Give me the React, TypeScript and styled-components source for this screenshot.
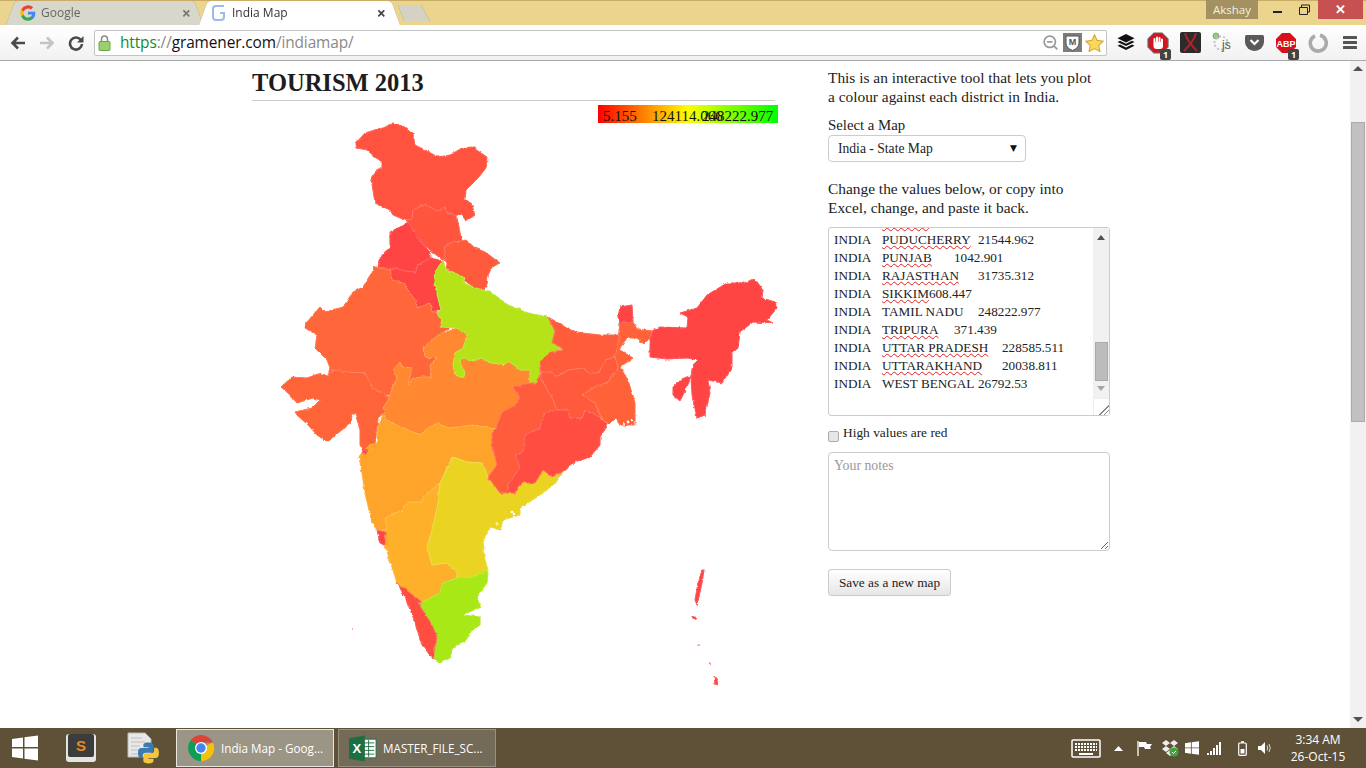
import React from "react";
import styled, { createGlobalStyle } from "styled-components";
import { ZoomOut } from "lucide-react";

const SERIF = `"Liberation Serif", "Times New Roman", serif`;
const UI = `"Open Sans", "Noto Sans", sans-serif`;

const GlobalStyle = createGlobalStyle`
  html, body {
    margin: 0;
    height: 100%;
    overflow: hidden;
    background: #fff;
  }
  * { box-sizing: border-box; }
`;

const Screen = styled.div`
  width: 1366px;
  height: 768px;
  display: flex;
  flex-direction: column;
  overflow: hidden;
`;

/* ---------- browser chrome ---------- */
const TitleBar = styled.div`
  height: 25px;
  flex: none;
  display: flex;
  align-items: flex-end;
  padding-left: 6px;
  background: #ebd48d;
  border-top: 1px solid #c9ad66;
  position: relative;
`;
const Tab = styled.div<{ $active?: boolean }>`
  position: relative;
  height: 24px;
  width: ${(p) => (p.$active ? 201 : 197)}px;
  margin-left: ${(p) => (p.$active ? -4 : 0)}px;
  padding: 0 ${(p) => (p.$active ? 14 : 12)}px 1px ${(p) => (p.$active ? 12 : 14)}px;
  display: flex;
  align-items: center;
  gap: 5px;
  font: 12px ${UI};
  color: ${(p) => (p.$active ? "#333" : "#666")};
  z-index: ${(p) => (p.$active ? 2 : 1)};
  filter: drop-shadow(0 0 0.6px #8a7c55);
  &::before {
    content: "";
    position: absolute;
    inset: 0;
    z-index: -1;
    background: ${(p) => (p.$active ? "#fff" : "#d8d7cc")};
    clip-path: polygon(0 100%, 8px 2px, 11px 0, calc(100% - 11px) 0, calc(100% - 8px) 2px, 100% 100%);
  }
`;
const TabTitle = styled.span`
  flex: 1;
  white-space: nowrap;
`;
const TabClose = styled.span<{ $active?: boolean }>`
  font: bold 16px/16px ${UI};
  color: ${(p) => (p.$active ? "#444" : "#777")};
`;
const NewTab = styled.div`
  position: relative;
  width: 32px;
  height: 16px;
  margin: 0 0 4px -2px;
  filter: drop-shadow(0 0 0.6px #8a7c55);
  &::before {
    content: "";
    position: absolute;
    inset: 0;
    background: #d5d2c4;
    clip-path: polygon(0 0, 23px 0, 100% 100%, 6px 100%);
  }
`;
const WindowControls = styled.div`
  position: absolute;
  top: -1px;
  right: 3px;
  display: flex;
  align-items: flex-start;
`;
const UserBadge = styled.div`
  width: 52px;
  height: 19px;
  margin-right: 60px;
  background: #a3915f;
  color: #f4f0e2;
  font: 11.5px/19px ${UI};
  text-align: center;
`;
const CloseButton = styled.div`
  width: 45px;
  height: 19px;
  background: #c75050;
  color: #fff;
  font: bold 13px/19px ${UI};
  text-align: center;
`;
const WinGlyph = styled.svg`
  position: absolute;
  top: 4px;
  right: 30px;
`;

const Toolbar = styled.div`
  height: 36px;
  flex: none;
  display: flex;
  align-items: center;
  padding-left: 3px;
  background: linear-gradient(#ffffff, #f1f1f1);
  border-bottom: 1px solid #a8a8a8;
`;
const NavButton = styled.div`
  width: 29px;
  display: flex;
  justify-content: center;
`;
const Omnibox = styled.div`
  flex: 1;
  height: 26px;
  margin: 0 3px 0 4px;
  padding: 0 1px 0 3px;
  display: flex;
  align-items: center;
  background: #fff;
  border: 1px solid #c4c4c4;
  border-radius: 2px;
`;
const Url = styled.div`
  flex: 1;
  margin-left: 9px;
  font: 15.4px ${UI};
  letter-spacing: -0.1px;
  white-space: nowrap;
  color: #8a8a8a;
`;
const UrlScheme = styled.span`
  color: #0a8f2f;
`;
const UrlHost = styled.span`
  color: #111;
`;
const ExtSlot = styled.div`
  position: relative;
  width: 32px;
  display: flex;
  justify-content: center;
  align-items: center;
`;
const InlineIcon = styled.div`
  width: 22px;
  display: flex;
  justify-content: center;
`;
const CountBadge = styled.span`
  position: absolute;
  right: 3px;
  bottom: -6px;
  width: 11px;
  height: 11px;
  border-radius: 2px;
  background: #444;
  color: #fff;
  font: bold 9px/11px ${UI};
  text-align: center;
`;

/* ---------- page ---------- */
const Viewport = styled.div`
  flex: 1;
  min-height: 0;
  display: flex;
`;
const Page = styled.main`
  flex: 1;
  display: flex;
  padding: 7px 0 0 252px;
  background: #fff;
  color: #222;
  font: 15.4px/19px ${SERIF};
`;
const MapColumn = styled.section`
  width: 526px;
`;
const Title = styled.h1`
  width: 523px;
  height: 33px;
  margin: 0 0 4px;
  border-bottom: 1px solid #ccc;
  font: bold 24.5px/30px ${SERIF};
  color: #1d1d1d;
`;
const MapCanvas = styled.div`
  position: relative;
`;
const MapSvg = styled.svg`
  display: block;
`;
const Legend = styled.div`
  position: absolute;
  top: 0;
  right: 0;
  width: 180px;
  height: 18px;
  background: linear-gradient(to right, #f00, #ff0, #0f0);
  color: #111;
  font: 15px/22px ${SERIF};
`;
const LegendValue = styled.span<{ $left: number }>`
  position: absolute;
  left: ${(p) => p.$left}px;
  white-space: nowrap;
`;

const Controls = styled.section`
  width: 282px;
  margin-left: 50px;
`;
const Paragraph = styled.p`
  margin: 0 0 10px;
`;
const FieldLabel = styled.div`
  font-size: 14.8px;
`;
const SelectWrap = styled.div`
  position: relative;
  width: 198px;
  height: 27px;
  margin-bottom: 17px;
  &::after {
    content: "▼";
    position: absolute;
    top: 6px;
    right: 9px;
    font: 9px/14px "DejaVu Sans", sans-serif;
    color: #111;
    pointer-events: none;
  }
`;
const MapSelect = styled.select`
  width: 100%;
  height: 100%;
  padding: 0 0 0 9px;
  appearance: none;
  background: #fff;
  border: 1px solid #ccc;
  border-radius: 4px;
  color: #222;
  font: 13.6px ${SERIF};
`;
const DataBox = styled.div`
  position: relative;
  height: 189px;
  margin-top: 9px;
  padding-left: 5px;
  border: 1px solid #ccc;
  border-radius: 3px;
  overflow: hidden;
  font: 13.2px/18px ${SERIF};
  tab-size: 24px;
  white-space: pre;
`;
const DataRow = styled.div<{ $clipped?: boolean }>`
  margin-top: ${(p) => (p.$clipped ? -15 : 0)}px;
`;
const Misspelt = styled.span`
  text-decoration: underline wavy #e02020 1px;
  text-underline-offset: 1px;
`;
const BoxScroll = styled.div`
  position: absolute;
  top: 0;
  right: 0;
  bottom: 0;
  width: 16px;
  display: flex;
  flex-direction: column;
  align-items: center;
  padding-top: 7px;
  background: #f1f1f1;
`;
const ScrollArrow = styled.span<{ $down?: boolean; $dim?: boolean; $wide?: boolean }>`
  flex: none;
  width: 0;
  height: 0;
  border-left: ${(p) => (p.$wide ? 5 : 4)}px solid transparent;
  border-right: ${(p) => (p.$wide ? 5 : 4)}px solid transparent;
  ${(p) => (p.$down ? "border-top" : "border-bottom")}: 5px solid ${(p) => (p.$dim ? "#a6a6a6" : "#505050")};
`;
const BoxThumb = styled.div`
  width: 13px;
  height: 39px;
  margin: 102px 0 5px;
  background: #bcbcbc;
  border: 1px solid #aaa;
`;
const ResizeCorner = styled.div`
  position: absolute;
  right: 0;
  bottom: 0;
  width: 16px;
  height: 17px;
  background:
    linear-gradient(135deg, transparent 66%, #888 66%, #888 71%, transparent 71%, transparent 82%, #888 82%, #888 87%, transparent 87%),
    #fff;
  border-left: 1px solid #eee;
  border-top: 1px solid #eee;
`;
const CheckRow = styled.label`
  display: flex;
  align-items: center;
  gap: 4px;
  height: 19px;
  margin-top: 7px;
  font-size: 13.4px;
`;
const CheckBox = styled.input`
  appearance: none;
  width: 11px;
  height: 11px;
  margin: 7px 0 0;
  background: #e6e6e6;
  border: 1px solid #ababab;
  border-radius: 2px;
`;
const Notes = styled.textarea`
  display: block;
  width: 282px;
  height: 99px;
  margin-top: 10px;
  padding: 4px 5px;
  border: 1px solid #ccc;
  border-radius: 4px;
  font: 13.8px/18px ${SERIF};
  &::placeholder { color: #999; }
`;
const SaveButton = styled.button`
  display: block;
  width: 123px;
  height: 27px;
  margin-top: 18px;
  padding: 0;
  background: linear-gradient(#fff, #e6e6e6);
  border: 1px solid #ccc;
  border-radius: 3px;
  color: #222;
  font: 13.3px ${SERIF};
`;

const PageScroll = styled.div`
  width: 16px;
  flex: none;
  padding: 5px 0 6px;
  display: flex;
  flex-direction: column;
  align-items: center;
  background: #f1f1f1;
`;
const PageThumb = styled.div`
  width: 14px;
  height: 300px;
  margin: 51px 0 auto;
  background: #c1c1c1;
  border: 1px solid #aaa;
`;

/* ---------- taskbar ---------- */
const Taskbar = styled.footer`
  height: 40px;
  flex: none;
  display: flex;
  align-items: center;
  padding-right: 13px;
  background: #5f5137;
`;
const Pinned = styled.div<{ $w: number }>`
  width: ${(p) => p.$w}px;
  display: flex;
  justify-content: center;
`;
const TaskButton = styled.div<{ $active?: boolean }>`
  width: 158px;
  height: 38px;
  margin-left: ${(p) => (p.$active ? 2 : 4)}px;
  padding-left: 10px;
  display: flex;
  align-items: center;
  gap: 6px;
  background: ${(p) => (p.$active ? "#9b9585" : "#736a57")};
  border: 1px solid ${(p) => (p.$active ? "#e8e6df" : "#98917f")};
  color: #fff;
  font: 11.7px ${UI};
  white-space: nowrap;
`;
const Spacer = styled.div`
  flex: 1;
`;
const Clock = styled.div`
  width: 70px;
  margin-left: 8px;
  text-align: center;
  color: #fff;
  font: 12px/17px ${UI};
`;

/* ---------- map data (screen coordinates) ---------- */
const REGIONS: { name: string; fill: string; points: string }[] = [
  { name: "Jammu and Kashmir", fill: "#ff533f", points: "356,143 365,133 375,130 380,129 392,124 403,126 413,133 415,145 425,150 438,157 450,155 462,148 472,147 487,157 486,168 478,178 466,190 465,200 472,205 475,215 466,221 462,215 455,215 448,213 445,208 437,211 425,204 413,210 412,219 405,220 393,215 390,210 375,203 371,178 375,172 382,168 382,162 375,157 367,150 357,148" },
  { name: "Himachal Pradesh", fill: "#ff553e", points: "405,220 408,222 420,242 430,250 440,258 445,260 444,247 453,242 462,241 457,218 455,215 448,213 445,208 437,211 425,204 413,210 412,219" },
  { name: "Uttarakhand", fill: "#ff5a3c", points: "445,260 444,247 453,242 462,241 466,240 475,248 485,252 500,263 492,267 488,275 487,285 483,290 473,287 464,280 465,278 453,272 446,273 447,263" },
  { name: "Punjab", fill: "#ff4444", points: "408,222 420,242 430,252 430,258 418,265 415,272 405,271 395,268 378,268 379,260 390,247 390,232 400,227" },
  { name: "Haryana", fill: "#ff4444", points: "390,269 395,268 405,271 415,272 418,265 430,258 432,258 442,261 435,272 434,280 438,298 441,310 432,312 430,303 417,308 415,300 403,283 392,280" },
  { name: "Rajasthan", fill: "#ff6639", points: "375,267 390,269 392,280 403,283 415,300 417,308 430,303 432,312 437,313 442,320 440,327 450,328 438,335 423,348 425,357 437,358 430,365 432,377 422,377 413,378 408,385 412,368 402,367 400,362 393,370 397,378 390,395 385,395 372,387 365,373 348,372 333,370 328,375 330,368 327,360 315,348 317,335 305,328 307,322 320,307 325,312 343,307 353,292 363,287" },
  { name: "Gujarat", fill: "#ff6439", points: "333,370 348,372 365,373 372,387 385,395 390,397 388,400 383,408 385,412 378,418 377,428 375,445 371,452 363,450 360,445 360,430 355,413 352,415 351,423 338,433 327,442 317,435 308,425 297,415 295,412 312,408 320,400 313,398 297,403 288,393 281,387 292,377 307,378 318,374 328,376" },
  { name: "Madhya Pradesh", fill: "#ff8830", points: "457,328 467,335 463,348 455,353 453,365 455,375 463,378 465,373 460,363 463,358 472,361 482,358 488,362 503,365 508,361 520,370 530,370 530,383 512,387 520,397 515,405 502,412 495,430 488,427 472,425 458,427 448,428 438,423 428,428 420,435 408,430 390,422 383,415 385,412 383,408 388,400 390,395 397,378 393,370 400,362 402,367 412,368 408,385 413,378 422,377 432,377 430,365 437,358 425,357 423,348 438,335" },
  { name: "Uttar Pradesh", fill: "#b5e317", points: "443,260 446,270 453,272 465,278 463,283 482,290 492,293 508,305 528,313 548,317 555,331 552,342 563,350 550,352 540,362 541,372 537,383 530,383 530,370 520,370 508,361 503,365 488,362 482,358 472,361 463,358 460,363 465,373 463,378 455,375 453,365 455,353 463,348 467,335 457,328 443,327 440,327 442,320 437,313 441,310 438,298 434,280 435,272" },
  { name: "Maharashtra", fill: "#ffa42b", points: "362,452 370,445 378,442 377,437 378,425 383,415 390,422 408,430 420,435 428,428 438,423 448,428 458,427 472,425 488,427 495,430 492,433 492,445 497,465 488,477 482,463 467,462 453,457 445,472 440,483 423,497 422,502 408,502 402,510 385,518 387,530 377,530 372,523 365,493 362,473 359,457" },
  { name: "Karnataka", fill: "#ffb02a", points: "385,518 402,510 408,502 422,502 423,497 440,483 438,503 432,530 427,547 432,565 447,563 457,573 457,578 443,583 440,593 422,602 397,583 392,567 385,545 385,532 377,530 387,530" },
  { name: "Goa", fill: "#ff4444", points: "377,530 385,532 385,545 380,543" },
  { name: "Andhra Pradesh", fill: "#ead421", points: "453,457 467,462 482,463 488,477 500,493 507,493 515,493 523,482 527,483 535,483 543,470 552,477 562,472 563,472 553,485 540,495 520,508 520,515 503,520 500,530 490,527 483,540 485,560 488,570 473,577 457,578 457,573 447,563 432,565 427,547 432,530 438,503 440,483 445,472" },
  { name: "Tamil Nadu", fill: "#a8e817", points: "488,570 487,583 477,597 480,607 463,615 480,617 480,625 470,632 465,642 453,647 450,658 440,663 433,659 437,637 433,627 427,617 418,603 422,602 440,593 443,583 457,578 473,577" },
  { name: "Kerala", fill: "#ff4d41", points: "397,583 422,602 418,603 427,617 433,627 437,637 433,659 422,645 413,617 405,597" },
  { name: "Chhattisgarh", fill: "#ff5c3c", points: "512,387 530,383 537,383 541,372 542,380 552,398 557,410 545,413 540,428 525,435 523,452 515,455 520,468 508,485 507,493 500,493 488,477 497,465 492,445 492,433 495,430 502,412 515,405 520,397" },
  { name: "Odisha", fill: "#ff4d41", points: "557,410 568,410 570,418 582,418 585,410 602,418 608,425 600,437 600,445 590,457 575,462 562,472 552,477 543,470 535,483 527,483 523,482 515,493 507,493 508,485 520,468 515,455 523,452 525,435 540,428 545,413" },
  { name: "Bihar", fill: "#ff5c3c", points: "548,317 562,325 570,330 582,333 600,335 620,335 617,348 615,357 605,360 600,372 590,374 583,368 568,370 558,376 550,372 540,372 540,362 550,352 563,350 552,342 555,331" },
  { name: "Jharkhand", fill: "#ff5a3c", points: "540,372 550,372 558,376 568,370 583,368 590,374 600,372 605,360 615,357 618,368 608,382 595,387 582,395 595,403 600,415 608,425 602,418 585,410 582,418 570,418 568,410 557,410 552,398 542,380" },
  { name: "West Bengal", fill: "#ff6239", points: "620,323 633,322 637,329 652,331 650,338 644,344 637,338 627,338 620,348 620,350 633,358 620,367 628,380 635,403 635,425 620,425 615,418 608,425 600,415 595,403 582,395 595,387 608,382 618,368 615,357 617,348" },
  { name: "Sikkim", fill: "#ff4444", points: "620,307 632,305 633,322 620,323 618,317" },
  { name: "North East", fill: "#ff4444", points: "652,331 660,327 687,328 688,317 680,313 697,308 707,295 727,283 743,283 755,279 763,290 762,298 775,302 777,308 767,320 773,323 753,322 740,332 738,348 732,353 732,367 722,383 708,380 710,393 705,415 697,418 692,395 691,377 687,387 680,401 673,395 673,387 683,378 691,376 693,365 698,360 687,358 667,359 650,357 650,338" },
  { name: "Andaman", fill: "#ff4444", points: "702,570 704,570 702,583 700,592 697,605 695,600 698,583" },
  { name: "Nicobar", fill: "#ff4444", points: "714,676 717,680 718,685 715,684" },
  { name: "Daman", fill: "#ff4444", points: "362,449 368,450 366,453 363,453" },
];

const SPECKS: [number, number, number, string][] = [
  [694, 618, 2, "#ff4444"],
  [699, 645, 0.8, "#ff4444"],
  [710, 663, 1, "#ff6a60"],
  [352, 629, 0.9, "#ff8080"],
  [628, 422, 1.4, "#ffffff"],
  [632, 420, 1.2, "#ffffff"],
  [624, 424, 1, "#ffffff"],
  [512, 512, 1.4, "#ffffff"],
  [514, 514, 1.2, "#ffffff"],
  [497, 524, 1.4, "#ffffff"],
];

// state, value, spell-check squiggle, separator before the value
const DATA: [string, string, boolean, string][] = [
  ["PUDUCHERRY", "21544.962", true, "\t"],
  ["PUNJAB", "1042.901", true, "\t"],
  ["RAJASTHAN", "31735.312", true, "\t"],
  ["SIKKIM", "608.447", true, ""],
  ["TAMIL NADU", "248222.977", false, "\t"],
  ["TRIPURA", "371.439", true, "\t"],
  ["UTTAR PRADESH", "228585.511", true, "\t"],
  ["UTTARAKHAND", "20038.811", true, "\t"],
  ["WEST BENGAL", "26792.53", false, "\t"],
];

/* ---------- icons ---------- */
const GoogleIcon = () => (
  <svg width="16" height="16" viewBox="0 0 24 24">
    <path fill="#4285f4" d="M23 12.3c0-.8-.1-1.600-.2-2.300H12v4.400h6.200c-.3 1.400-1.100 2.600-2.300 3.400v2.900h3.700c2.100-2 3.400-4.900 3.400-8.400z" />
    <path fill="#34a853" d="M12 23.500c3.100 0 5.700-1 7.600-2.800l-3.700-2.900c-1 .7-2.400 1.100-3.900 1.100-3 0-5.500-2-6.400-4.700H1.800v3A11.500 11.500 0 0 0 12 23.500z" />
    <path fill="#fbbc05" d="M5.600 14.200a6.900 6.900 0 0 1 0-4.400v-3H1.800a11.500 11.500 0 0 0 0 10.400z" />
    <path fill="#ea4335" d="M12 5.100c1.700 0 3.200.6 4.400 1.700l3.300-3.300A11.500 11.500 0 0 0 1.800 6.800l3.800 3c.9-2.700 3.400-4.700 6.400-4.700z" />
  </svg>
);
const GramenerFavicon = () => (
  <svg width="16" height="18" viewBox="0 0 16 18" fill="none" stroke="#9db8ea" strokeWidth="2">
    <path d="M13 2H5Q2 2 2 5v8q0 3 3 3h5q3 0 3-3V9H9" />
  </svg>
);
const BackArrow = ({ color }: { color: string }) => (
  <svg width="16" height="14" viewBox="0 0 16 14" fill="none" stroke={color} strokeWidth="2.600">
    <path d="M15 7H3M8 1.500 2.500 7 8 12.500" />
  </svg>
);
const ForwardArrow = ({ color }: { color: string }) => (
  <svg width="16" height="14" viewBox="0 0 16 14" fill="none" stroke={color} strokeWidth="2.600">
    <path d="M1 7h12M8 1.500 13.500 7 8 12.500" />
  </svg>
);
const ReloadIcon = () => (
  <svg width="16" height="16" viewBox="0 0 16 16">
    <path d="M13 5.200A6 6 0 1 0 14 9" fill="none" stroke="#4a4a4a" strokeWidth="2.600" />
    <path d="M15.500 1v6.500H9z" fill="#4a4a4a" />
  </svg>
);
const LockIcon = () => (
  <svg width="13" height="17" viewBox="0 0 13 17">
    <path d="M3.500 8V5a3 3 0 0 1 6 0v3" fill="none" stroke="#8a8a8a" strokeWidth="1.500" />
    <rect x="1" y="7.500" width="11" height="9" rx="1" fill="#9bd070" stroke="#6da544" />
  </svg>
);
const ShieldIcon = () => (
  <svg width="19" height="19" viewBox="0 0 19 19">
    <rect width="19" height="19" fill="#7d7d7d" />
    <path d="M3 3h13v7q0 5-6.500 7.500Q3 15 3 10z" fill="#fff" stroke="#555" />
    <text x="9.500" y="12" textAnchor="middle" fontSize="9" fontWeight="bold" fontFamily="Liberation Sans" fill="#555">M</text>
  </svg>
);
const StarIcon = () => (
  <svg width="19" height="18" viewBox="0 0 24 23">
    <path d="M12 1l3.400 7.200 7.800 1-5.700 5.400 1.500 7.800L12 18.600 5 22.400l1.500-7.800L.8 9.200l7.800-1z" fill="#fbd75b" stroke="#d6a93a" strokeWidth="1.400" />
  </svg>
);
const LayersIcon = () => (
  <svg width="18" height="17" viewBox="0 0 18 17">
    <path d="M9 0l8.500 4.200L9 8.400.5 4.200z" fill="#111" />
    <path d="M3 6.700l6 3 6-3 2.500 1.200L9 12.100.5 7.900z" fill="#111" />
    <path d="M3 10.500l6 3 6-3 2.500 1.200L9 16 .5 11.700z" fill="#111" />
  </svg>
);
const StopIcon = () => (
  <svg width="22" height="22" viewBox="0 0 22 22">
    <path d="M7 1h8l6 6v8l-6 6H7l-6-6V7z" fill="#d9131d" stroke="#666" strokeWidth="1.200" />
    <g fill="#fff">
      <rect x="6.500" y="6" width="2" height="7" rx="1" />
      <rect x="9" y="4.500" width="2" height="8" rx="1" />
      <rect x="11.500" y="5" width="2" height="8" rx="1" />
      <rect x="14" y="6.500" width="2" height="7" rx="1" />
      <rect x="6.500" y="10" width="9.500" height="7" rx="3" />
    </g>
  </svg>
);
const SwordsIcon = () => (
  <svg width="21" height="21" viewBox="0 0 21 21">
    <rect width="21" height="21" rx="2" fill="#2b2b2b" />
    <path d="M5 1q2 8 12 18M16 1Q14 9 4 19" fill="none" stroke="#b3202a" strokeWidth="2" />
  </svg>
);
const JsIcon = () => (
  <svg width="21" height="21" viewBox="0 0 21 21">
    <circle cx="4" cy="4" r="3" fill="#8fd06a" stroke="#999" />
    <circle cx="9" cy="11" r="6.500" fill="none" stroke="#c4c4c4" strokeWidth="2" strokeDasharray="2 2" />
    <text x="10" y="17" fontSize="12" fontFamily="Liberation Sans" fill="#555">js</text>
  </svg>
);
const PocketIcon = () => (
  <svg width="19" height="17" viewBox="0 0 19 17">
    <path d="M1.500 1h16Q19 1 19 3v5a9.500 9 0 0 1-19 0V3q0-2 1.500-2z" fill="#5a5a5a" />
    <path d="M5.500 6l4 4 4-4" fill="none" stroke="#fff" strokeWidth="2.200" />
  </svg>
);
const AbpIcon = () => (
  <svg width="22" height="22" viewBox="0 0 22 22">
    <path d="M7 1h8l6 6v8l-6 6H7l-6-6V7z" fill="#d7101a" />
    <text x="11" y="14.500" textAnchor="middle" fontSize="9" fontWeight="bold" fontFamily="Liberation Sans" fill="#fff">ABP</text>
  </svg>
);
const RingIcon = () => (
  <svg width="20" height="20" viewBox="0 0 20 20" fill="none" stroke="#aaa" strokeWidth="3.600">
    <path d="M7 2.800A8 8 0 1 0 12 2.300" />
  </svg>
);
const MenuIcon = () => (
  <svg width="14" height="13" viewBox="0 0 14 13" fill="#555">
    <rect width="14" height="3" rx=".5" />
    <rect y="5" width="14" height="3" rx=".5" />
    <rect y="10" width="14" height="3" rx=".5" />
  </svg>
);
const WindowsLogo = ({ size, color }: { size: number; color: string }) => (
  <svg width={size} height={size} viewBox="0 0 26 26" fill={color}>
    <path d="M0 4l11-1.500V12H0zM12.500 2.300 26 .5V12H12.500zM0 13.500h11v10L0 22zM12.500 13.500H26v12l-13.500-1.800z" />
  </svg>
);
const SublimeIcon = () => (
  <svg width="32" height="30" viewBox="0 0 32 30">
    <rect x="1" y="1" width="30" height="28" rx="3" fill="#e4e4e4" />
    <rect x="3" y="1" width="26" height="23" rx="2" fill="#3c3c3c" />
    <text x="16" y="18" textAnchor="middle" fontSize="15" fontWeight="bold" fontFamily="Liberation Sans" fill="#e88a23">S</text>
  </svg>
);
const PYTHON_SNAKE = "M54.900 0C26.800 0 28.600 12.200 28.600 12.200v12.600h26.800v3.800H17.900S0 26.600 0 54.900s15.700 27.300 15.700 27.300h9.300V69.100s-.5-15.700 15.400-15.700h26.600s14.900.2 14.900-14.400V14.800S84.200 0 54.900 0z";
const PythonIcon = () => (
  <svg width="32" height="32" viewBox="0 0 32 32">
    <path d="M1 1h17l6 6v18H1z" fill="#e8e8e8" stroke="#bbb" />
    <path d="M4 6h11M4 10h14M4 14h9M4 18h9M4 22h9" stroke="#bdbdbd" />
    <g transform="translate(11 10.500) scale(.19)">
      <path d={PYTHON_SNAKE} fill="#3d7ab0" />
      <path d={PYTHON_SNAKE} fill="#f5c63c" transform="rotate(180 55 55)" />
    </g>
  </svg>
);
const ChromeLogo = () => (
  <svg width="28" height="28" viewBox="0 0 30 30">
    <path d="M15 15 4.200 6.500A14 14 0 0 1 27.800 9H15z" fill="#db4437" />
    <path d="M15 15 27.800 9A14 14 0 0 1 15 29z" fill="#f4c20d" />
    <path d="M15 15v14A14 14 0 0 1 4.200 6.500z" fill="#0f9d58" />
    <circle cx="15" cy="15" r="6.500" fill="#fff" />
    <circle cx="15" cy="15" r="5" fill="#4285f4" />
  </svg>
);
const ExcelIcon = () => (
  <svg width="28" height="27" viewBox="0 0 30 28">
    <rect x="14" y="4" width="15" height="20" fill="#fff" stroke="#1d6f42" />
    <path d="M16 8h11M16 12h11M16 16h11M16 20h11M21 5v18" stroke="#1d6f42" />
    <path d="M0 3 17 0v28L0 25z" fill="#1d6f42" />
    <text x="8.500" y="19" textAnchor="middle" fontSize="14" fontWeight="bold" fontFamily="Liberation Sans" fill="#fff">X</text>
  </svg>
);
const KeyboardIcon = () => (
  <svg width="30" height="19" viewBox="0 0 30 19">
    <rect x="1" y="1" width="28" height="17" rx="1" fill="none" stroke="#fff" strokeWidth="1.500" />
    <path d="M4 5h22M4 8h22M4 11h22" stroke="#fff" strokeDasharray="2 1" strokeWidth="2" />
    <path d="M8 15h14" stroke="#fff" strokeWidth="2" />
  </svg>
);
const TrayArrow = () => (
  <svg width="9" height="5" viewBox="0 0 9 5"><path d="M4.500 0 9 5H0z" fill="#fff" /></svg>
);
const FlagIcon = () => (
  <svg width="15" height="15" viewBox="0 0 15 15">
    <path d="M1 0v15" stroke="#fff" strokeWidth="1.300" />
    <path d="M2 1h7l1 2h5l-2 3 1 2H8L7 6H2z" fill="#fff" />
  </svg>
);
const DropboxIcon = () => (
  <svg width="18" height="18" viewBox="0 0 18 18">
    <path d="M5 1l4 3-4 3-4-3zM13 1l4 3-4 3-4-3zM5 7l4 3-4 3-4-3zM13 7l4 3-4 3-4-3zM5 14l4-3 4 3-4 3z" fill="#eee" />
    <circle cx="13" cy="13" r="4.500" fill="#3fa535" />
    <path d="M11 13l1.500 1.500L15 12" stroke="#fff" fill="none" />
  </svg>
);
const SignalIcon = () => (
  <svg width="15" height="13" viewBox="0 0 15 13" fill="#fff">
    <rect y="11" width="2" height="2" />
    <rect x="3" y="9" width="2" height="4" />
    <rect x="6" y="6" width="2" height="7" />
    <rect x="9" y="3" width="2" height="10" />
    <rect x="12" width="2" height="13" />
  </svg>
);
const BatteryIcon = () => (
  <svg width="9" height="15" viewBox="0 0 9 15">
    <rect x=".7" y="2" width="7.600" height="12.300" rx="1" fill="none" stroke="#fff" strokeWidth="1.200" />
    <rect x="3" y=".2" width="3" height="1.600" fill="#fff" />
    <rect x="2.500" y="8" width="4" height="4.500" fill="#fff" />
  </svg>
);
const SpeakerIcon = () => (
  <svg width="15" height="14" viewBox="0 0 15 14" fill="none">
    <path d="M0 5h3l4-4v12L3 9H0z" fill="#fff" />
    <path d="M9 4.500q1.500 2.500 0 5M11 3q2.500 4 0 8" stroke="#ddd" />
  </svg>
);

export default function App() {
  return (
    <Screen>
      <GlobalStyle />
      <TitleBar>
        <Tab>
          <GoogleIcon />
          <TabTitle>Google</TabTitle>
          <TabClose>×</TabClose>
        </Tab>
        <Tab $active>
          <GramenerFavicon />
          <TabTitle>India Map</TabTitle>
          <TabClose $active>×</TabClose>
        </Tab>
        <NewTab />
        <WindowControls>
          <UserBadge>Akshay</UserBadge>
          <WinGlyph width="60" height="12" viewBox="0 0 60 12">
            <rect x="0" y="7" width="9" height="2" fill="#222" />
            <path d="M26.500 3.500h8v7h-8zM28.500 3.500V1h8v7h-2" fill="none" stroke="#222" />
          </WinGlyph>
          <CloseButton>✕</CloseButton>
        </WindowControls>
      </TitleBar>

      <Toolbar>
        <NavButton><BackArrow color="#4a4a4a" /></NavButton>
        <NavButton><ForwardArrow color="#c4c4c4" /></NavButton>
        <NavButton><ReloadIcon /></NavButton>
        <Omnibox>
          <LockIcon />
          <Url>
            <UrlScheme>https</UrlScheme>://<UrlHost>gramener.com</UrlHost>/indiamap/
          </Url>
          <InlineIcon><ZoomOut size={17} color="#999" strokeWidth={2.4} /></InlineIcon>
          <InlineIcon><ShieldIcon /></InlineIcon>
          <InlineIcon><StarIcon /></InlineIcon>
        </Omnibox>
        <ExtSlot><LayersIcon /></ExtSlot>
        <ExtSlot><StopIcon /><CountBadge>1</CountBadge></ExtSlot>
        <ExtSlot><SwordsIcon /></ExtSlot>
        <ExtSlot><JsIcon /></ExtSlot>
        <ExtSlot><PocketIcon /></ExtSlot>
        <ExtSlot><AbpIcon /><CountBadge>1</CountBadge></ExtSlot>
        <ExtSlot><RingIcon /></ExtSlot>
        <ExtSlot><MenuIcon /></ExtSlot>
      </Toolbar>

      <Viewport>
        <Page>
          <MapColumn>
            <Title>TOURISM 2013</Title>
            <MapCanvas>
              <Legend>
                <LegendValue $left={5}>5.155</LegendValue>
                <LegendValue $left={54}>124114.066</LegendValue>
                <LegendValue $left={104}>248222.977</LegendValue>
              </Legend>
              <MapSvg width="526" height="620" viewBox="252 105 526 620">
                <defs>
                  <filter id="rough" x="-2%" y="-2%" width="104%" height="104%" colorInterpolationFilters="sRGB">
                    <feTurbulence type="fractalNoise" baseFrequency="0.22" numOctaves="2" seed="4" />
                    <feDisplacementMap in="SourceGraphic" scale="3" xChannelSelector="R" yChannelSelector="G" />
                  </filter>
                </defs>
                <g filter="url(#rough)">
                  {REGIONS.map((r) => (
                    <polygon
                      key={r.name}
                      points={r.points}
                      fill={r.fill}
                      stroke={r.fill}
                      strokeWidth="1"
                      strokeLinejoin="round"
                    />
                  ))}
                  {REGIONS.map((r) => (
                    <polygon
                      key={r.name}
                      points={r.points}
                      fill="none"
                      stroke="#ffffff"
                      strokeOpacity="0.16"
                      strokeWidth="0.7"
                      strokeLinejoin="round"
                    />
                  ))}
                  {SPECKS.map(([cx, cy, rad, fill]) => (
                    <circle key={`${cx}-${cy}`} cx={cx} cy={cy} r={rad} fill={fill} />
                  ))}
                </g>
              </MapSvg>
            </MapCanvas>
          </MapColumn>

          <Controls>
            <Paragraph>
              This is an interactive tool that lets you plot
              <br />
              a colour against each district in India.
            </Paragraph>
            <FieldLabel>Select a Map</FieldLabel>
            <SelectWrap>
              <MapSelect defaultValue="state">
                <option value="state">India - State Map</option>
              </MapSelect>
            </SelectWrap>
            <Paragraph>
              Change the values below, or copy into
              <br />
              Excel, change, and paste it back.
            </Paragraph>
            <DataBox>
              <DataRow $clipped>
                {"INDIA\t"}
                <Misspelt>ORISSA</Misspelt>
                {"\t\t3975"}
              </DataRow>
              {DATA.map(([state, value, flagged, separator]) => (
                <DataRow key={state}>
                  {"INDIA\t"}
                  {flagged ? <Misspelt>{state}</Misspelt> : state}
                  {separator + value}
                </DataRow>
              ))}
              <BoxScroll>
                <ScrollArrow />
                <BoxThumb />
                <ScrollArrow $down $dim />
              </BoxScroll>
              <ResizeCorner />
            </DataBox>
            <CheckRow>
              <CheckBox type="checkbox" />
              High values are red
            </CheckRow>
            <Notes placeholder="Your notes" />
            <SaveButton>Save as a new map</SaveButton>
          </Controls>
        </Page>
        <PageScroll>
          <ScrollArrow $wide />
          <PageThumb />
          <ScrollArrow $down $wide />
        </PageScroll>
      </Viewport>

      <Taskbar>
        <Pinned $w={50}><WindowsLogo size={26} color="#fff" /></Pinned>
        <Pinned $w={62}><SublimeIcon /></Pinned>
        <Pinned $w={62}><PythonIcon /></Pinned>
        <TaskButton $active>
          <ChromeLogo />
          India Map - Goog...
        </TaskButton>
        <TaskButton>
          <ExcelIcon />
          MASTER_FILE_SC...
        </TaskButton>
        <Spacer />
        <Pinned $w={34}><KeyboardIcon /></Pinned>
        <Pinned $w={30}><TrayArrow /></Pinned>
        <Pinned $w={22}><FlagIcon /></Pinned>
        <Pinned $w={30}><DropboxIcon /></Pinned>
        <Pinned $w={14}><WindowsLogo size={14} color="#fff" /></Pinned>
        <Pinned $w={30}><SignalIcon /></Pinned>
        <Pinned $w={26}><BatteryIcon /></Pinned>
        <Pinned $w={20}><SpeakerIcon /></Pinned>
        <Clock>
          3:34 AM
          <br />
          26-Oct-15
        </Clock>
      </Taskbar>
    </Screen>
  );
}
